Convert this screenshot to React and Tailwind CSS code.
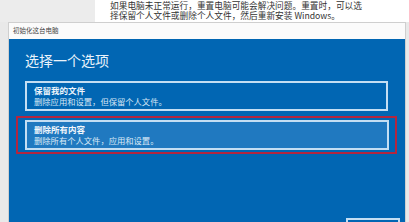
export default function App() {
  return (
    <div
      className="w-[409px] h-[222px] overflow-hidden flex flex-col bg-[#e9e9e9]"
      style={{ fontFamily: '"Noto Sans CJK SC", "Noto Sans", sans-serif' }}
    >
      {/* background page */}
      <div className="h-[22px] flex shrink-0">
        <div className="w-[95px] bg-[#ececec]" />
        <div className="flex-1 bg-white pl-[15px] pt-[1px] text-[8.7px] leading-[10px] text-[#333] whitespace-nowrap overflow-hidden">
          <div>如果电脑未正常运行，重置电脑可能会解决问题。重置时，可以选</div>
          <div>择保留个人文件或删除个人文件，然后重新安装 Windows。</div>
        </div>
      </div>

      {/* dialog */}
      <div className="flex-1 flex pl-[8px] pr-[3px]">
        <div className="flex-1 flex flex-col border border-[#cfcfcf] border-b-0">
          <div className="h-[16px] bg-[#fbfbfb] flex items-center pl-[4px] text-[6.5px] text-[#444]">
            初始化这台电脑
          </div>
          <div className="flex-1 bg-[#0166b3] pt-[12px] pl-[16px] pr-[17px] relative">
            <div className="text-[14px] leading-[18px] text-[#eaf3fb]">选择一个选项</div>

            <div className="mt-[12px] h-[30px] border-2 border-[#c4def3] flex flex-col justify-center pl-[7px] text-[#eef5fb]">
              <div className="text-[8.5px] leading-[11px] font-bold">保留我的文件</div>
              <div className="text-[8.3px] leading-[11px] text-[#d6e7f6]">删除应用和设置，但保留个人文件。</div>
            </div>

            <div className="mt-[5px] -mx-[9px] p-[2px] pl-[7px] pr-[6px] border-[2.5px] border-[#b3263f]">
              <div className="h-[30px] border-2 border-[#c4def3] bg-[#2079c0] flex flex-col justify-center pl-[7px] text-[#f2f7fc]">
                <div className="text-[8.5px] leading-[11px] font-bold">删除所有内容</div>
                <div className="text-[8.3px] leading-[11px] text-[#dbeaf7]">删除所有个人文件，应用和设置。</div>
              </div>
            </div>

            <div className="absolute right-[5px] top-[179px] w-[54px] h-[12px] border-2 border-[#c4def3]" />
          </div>
        </div>
      </div>
    </div>
  );
}
